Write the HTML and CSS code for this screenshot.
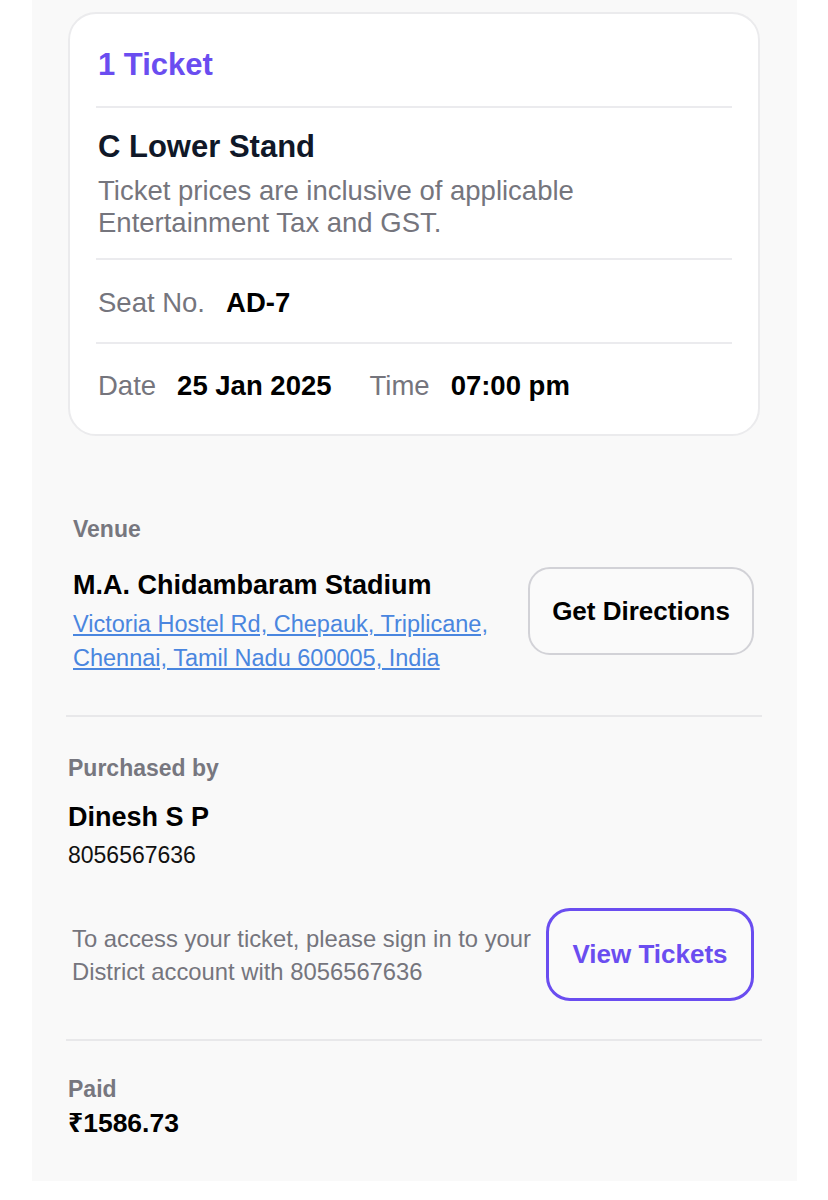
FILE: index.html
```html
<!DOCTYPE html>
<html lang="en">
<head>
    <meta charset="UTF-8">
    <meta name="viewport" content="width=device-width, initial-scale=1.0">
    <title>Booking Details</title>
    <link rel="stylesheet" href="styles.css">
</head>
<body>

<div class="panel">
    <!-- Ticket card -->
    <div class="card">
        <div class="card-row card-head">1 Ticket</div>
        <div class="card-row stand">
            <h2>C Lower Stand</h2>
            <p>Ticket prices are inclusive of applicable<br>Entertainment Tax and GST.</p>
        </div>
        <div class="card-row info-row">
            <span class="pair"><span class="key">Seat No.</span><span class="val">AD-7</span></span>
        </div>
        <div class="card-row info-row">
            <span class="pair"><span class="key">Date</span><span class="val">25 Jan 2025</span></span>
            <span class="pair"><span class="key">Time</span><span class="val">07:00 pm</span></span>
        </div>
    </div>

    <!-- Venue -->
    <div class="section venue">
        <p class="label">Venue</p>
        <div class="venue-row">
            <div class="venue-info">
                <p class="name">M.A. Chidambaram Stadium</p>
                <a class="address" href="#">Victoria Hostel Rd, Chepauk, Triplicane,<br>Chennai, Tamil Nadu 600005, India</a>
            </div>
            <button class="btn btn-plain">Get Directions</button>
        </div>
    </div>

    <div class="divider"></div>

    <!-- Buyer -->
    <div class="section buyer">
        <p class="label">Purchased by</p>
        <p class="name buyer-name">Dinesh S P</p>
        <p class="phone">8056567636</p>
        <div class="access-row">
            <p class="access">To access your ticket, please sign in to your<br>District account with 8056567636</p>
            <button class="btn btn-purple">View Tickets</button>
        </div>
    </div>

    <div class="divider divider-low"></div>

    <!-- Payment -->
    <div class="section paid">
        <p class="label">Paid</p>
        <p class="amount">₹1586.73</p>
    </div>
</div>

</body>
</html>
```

FILE: styles.css
```css
* { margin: 0; padding: 0; box-sizing: border-box; }
body {
    background: #fff;
    font-family: "Liberation Sans", Arial, "Noto Sans", sans-serif;
}
.panel {
    width: 765px; margin-left: 32px; background: #f9f9f9;
    padding-top: 12px; padding-bottom: 42px;
}

/* card */
.card {
    margin: 0 37px 0 36px; background: #fff;
    border: 2px solid #ebebed; border-radius: 28px;
    padding: 0 26px;
}
.card-row { border-top: 2px solid #ebebee; padding-left: 2px !important; }
.card-row:first-child { border-top: none; }
.card-head {
    font-size: 31px; line-height: 36px; font-weight: bold; color: #6a4df0;
    padding: 33px 0 23px;
}
.stand { padding: 21px 0 19px; }
.stand h2 { font-size: 31px; line-height: 36px; font-weight: bold; color: #101828; }
.stand p { font-size: 27.5px; line-height: 32px; color: #75757d; margin-top: 10px; }
.info-row {
    display: flex; gap: 38px;
    font-size: 27.5px; line-height: 32px; padding: 27px 0 23px;
}
.info-row:last-child { padding: 26px 0 32px; }
.pair { display: flex; }
.key { color: #75757d; margin-right: 21px; }
.val { color: #000; font-weight: bold; }

/* sections */
.section { padding: 0 43px 0 36px; }
.label { font-size: 23px; line-height: 26px; font-weight: bold; color: #77777f; }
.venue { padding-left: 41px; margin-top: 80px; }
.venue-row {
    display: flex; justify-content: space-between; align-items: flex-start;
    margin-top: 25px;
}
.venue-info { padding-top: 2px; }
.name { font-size: 27px; line-height: 32px; font-weight: bold; color: #000; }
.address {
    display: block; margin-top: 6px;
    font-size: 23.5px; line-height: 34px; color: #4a86df; text-decoration: underline;
}

.btn {
    font-family: "Liberation Sans", Arial, sans-serif; font-weight: bold; font-size: 26px;
    background: #fafafa; cursor: pointer;
}
.btn-plain {
    width: 226px; height: 88px; border: 2px solid #d2d2d7; border-radius: 22px; color: #000;
}
.btn-purple {
    width: 208px; height: 93px; border: 3px solid #6a4df0; border-radius: 24px; color: #6a4df0;
}

.divider { height: 2px; background: #e8e8ea; margin: 40px 35px 0 34px; }
.divider-low { margin-top: 38px; }

.buyer { margin-top: 38px; }
.buyer-name { margin-top: 20px; }
.phone { font-size: 23px; line-height: 28px; color: #111; margin-top: 8px; }
.access-row {
    display: flex; justify-content: space-between; align-items: center;
    margin-top: 39px;
}
.access { font-size: 23.8px; line-height: 33px; color: #75757d; margin-left: 4px; }

.paid { margin-top: 35px; }
.amount { font-size: 26.5px; line-height: 32px; font-weight: bold; color: #000; margin-top: 5px; }
```
